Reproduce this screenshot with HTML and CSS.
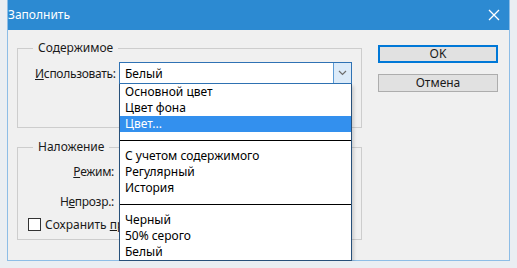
FILE: index.html
```html
<!DOCTYPE html>
<html lang="ru">
<head>
  <meta charset="UTF-8">
  <meta name="viewport" content="width=device-width, initial-scale=1.0">
  <title>Заполнить</title>
  <link rel="stylesheet" href="styles.css">
</head>
<body>
  <div class="window">
    <div class="titlebar">
      <span class="title">Заполнить</span>
      <svg class="close" width="12" height="12" viewBox="0 0 12 12">
        <path d="M1 1 L11 11 M11 1 L1 11" stroke="#fff" stroke-width="1.3" fill="none"/>
      </svg>
    </div>

    <div class="content">
      <div class="left">
        <fieldset class="group group-contents">
          <legend>Содержимое</legend>
          <div class="row">
            <label class="lbl"><u>И</u>спользовать:</label>
            <div class="combo">
              <div class="combo-box">
                <span class="combo-value">Белый</span>
                <span class="combo-btn">
                  <svg width="9" height="6" viewBox="0 0 9 6">
                    <path d="M1 1 L4.5 4.5 L8 1" stroke="#6d6d6d" stroke-width="1.2" fill="none"/>
                  </svg>
                </span>
              </div>
              <ul class="combo-list">
                <li>Основной цвет</li>
                <li>Цвет фона</li>
                <li class="selected">Цвет...</li>
                <li class="sep"><span></span></li>
                <li>С учетом содержимого</li>
                <li>Регулярный</li>
                <li>История</li>
                <li class="sep"><span></span></li>
                <li>Черный</li>
                <li>50% серого</li>
                <li>Белый</li>
              </ul>
            </div>
          </div>
        </fieldset>

        <fieldset class="group group-blend">
          <legend>Наложение</legend>
          <div class="row">
            <label class="lbl"><u>Р</u>ежим:</label>
            <div class="field"></div>
          </div>
          <div class="row row-gap">
            <label class="lbl">Н<u>е</u>прозр.:</label>
            <div class="field field-short"></div>
          </div>
          <div class="check-row">
            <span class="checkbox"></span>
            <span class="check-label">Сохранить <u>пр</u>озрачность</span>
          </div>
        </fieldset>
      </div>

      <div class="buttons">
        <button class="btn btn-default">OK</button>
        <button class="btn">Отмена</button>
      </div>
    </div>
  </div>
</body>
</html>
```

FILE: styles.css
```css
body {
  margin: 0;
  background: #eaeef2;
  font-family: "Noto Sans", "Open Sans", sans-serif;
  font-size: 12px;
  color: #000;
}
.window {
  margin-left: 7px;
  width: 501px;
  height: 260px;
  background: #f0f0f0;
  border: 1px solid #8dbde6;
  border-top: none;
}
.titlebar {
  height: 30px;
  background: #2c8ad2;
  display: flex;
  align-items: center;
  justify-content: space-between;
  padding: 0 9px 0 0;
}
.title {
  color: #fff;
  line-height: 16px;
}
.close {
  display: block;
}
.content {
  display: flex;
  padding: 10px 0 0 9px;
}
.left {
  width: 345px;
}
.group {
  margin: 0;
  padding: 0 8px 0 17px;
  border: 1px solid #cdcdcd;
  min-width: 0;
}
.group legend {
  margin-left: -2px;
  padding: 0 5px;
  line-height: 16px;
  color: #1a1a1a;
}
.group-contents {
  padding-top: 6px;
  padding-bottom: 43px;
}
.group-blend {
  margin-top: 11px;
  padding-top: 5px;
  padding-bottom: 8px;
}
.row {
  display: flex;
  align-items: center;
  height: 22px;
}
.row-gap {
  margin-top: 8px;
}
.lbl {
  width: 84px;
  padding-right: 5px;
  box-sizing: border-box;
  text-align: right;
  white-space: nowrap;
  letter-spacing: -0.3px;
  color: #1a1a1a;
}
.combo {
  position: relative;
  width: 233px;
}
.combo-box {
  display: flex;
  align-items: center;
  justify-content: space-between;
  height: 22px;
  box-sizing: border-box;
  border: 1px solid #2f72b4;
  background: #fff;
  padding-left: 5px;
}
.combo-btn {
  width: 17px;
  height: 20px;
  background: #dcebf9;
  border-left: 1px solid #5d9bd4;
  display: flex;
  align-items: center;
  justify-content: center;
}
.combo-list {
  position: absolute;
  top: 100%;
  left: 0;
  right: 0;
  z-index: 5;
  margin: 0;
  padding: 0;
  list-style: none;
  background: #fff;
  border: 1px solid #27507a;
  border-top: none;
  box-shadow: 2px 2px 3px rgba(0, 0, 0, 0.15);
}
.combo-list li {
  height: 16px;
  line-height: 16px;
  padding-left: 5px;
  white-space: nowrap;
}
.combo-list li.selected {
  background: #3390ee;
  color: #fff;
}
.combo-list li.sep {
  padding: 0;
  display: flex;
  align-items: center;
}
.combo-list li.sep span {
  flex: 1;
  height: 1px;
  background: #000;
}
.field {
  width: 233px;
  height: 22px;
  box-sizing: border-box;
  border: 1px solid #adadad;
  background: #fff;
}
.field-short {
  width: 60px;
}
.check-row {
  display: flex;
  align-items: center;
  gap: 4px;
  height: 14px;
  margin-top: 5px;
  margin-left: -7px;
  white-space: nowrap;
  color: #1a1a1a;
}
.check-label {
  max-width: 74px;
  overflow: hidden;
}
.checkbox {
  width: 11px;
  height: 11px;
  border: 1px solid #333;
  background: #fff;
}
.buttons {
  display: flex;
  flex-direction: column;
  gap: 11px;
  margin-left: 16px;
  margin-top: 5px;
}
.btn {
  width: 120px;
  height: 18px;
  padding: 0;
  font-family: inherit;
  font-size: 12px;
  line-height: 14px;
  color: #1a1a1a;
  background: #e1e1e1;
  border: 1px solid #adadad;
}
.btn-default {
  border: 2px solid #0078d7;
}
```
